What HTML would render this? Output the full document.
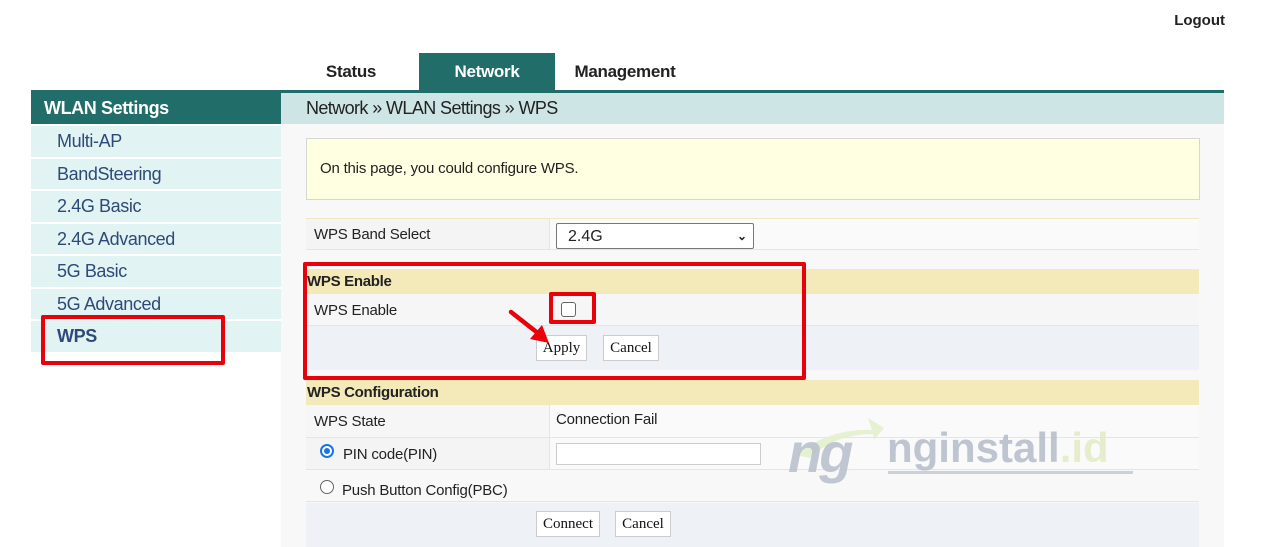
<!DOCTYPE html>
<html><head><meta charset="utf-8"><style>
*{margin:0;padding:0;box-sizing:border-box}
body{width:1263px;height:547px;background:#fff;font-family:"Liberation Sans",sans-serif;position:relative;overflow:hidden;color:#222}
.a{position:absolute}
.tab{position:absolute;top:53px;height:37px;font-size:17px;font-weight:bold;line-height:38px;text-align:center;color:#222;letter-spacing:-0.3px}
.side{position:absolute;left:31px;width:250px;height:30.5px;background:#e2f3f3;color:#2d4a78;font-size:18px;line-height:31px;padding-left:26px;letter-spacing:-0.4px}
.row{position:absolute;left:306px;width:893px;border-top:1px solid #f0e6c0;border-bottom:1px solid #f0e6c0}
.lbl{position:absolute;font-size:15px;color:#222;letter-spacing:-0.2px}
.hdr{position:absolute;left:306px;width:893px;background:#f3e9b9;font-weight:bold;font-size:15px;line-height:25px;padding-left:1px;letter-spacing:-0.3px}
.btn{position:absolute;background:#fff;border:1px solid #ccc;font-family:"Liberation Serif",serif;font-size:15px;text-align:center;color:#111}
.red{position:absolute;border:4px solid #e8000a;border-radius:2px}
</style></head><body>
<div class="a" style="right:38px;top:12px;font-weight:bold;font-size:15px">Logout</div>
<div class="tab" style="left:296px;width:110px">Status</div>
<div class="tab" style="left:419px;width:136px;background:#216d6a;color:#fff">Network</div>
<div class="tab" style="left:555px;width:140px">Management</div>

<div class="a" style="left:31px;top:90px;width:250px;height:34px;background:#216d6a;color:#fff;font-weight:bold;font-size:18px;line-height:36px;padding-left:13px;letter-spacing:-0.4px">WLAN Settings</div>
<div class="a" style="left:281px;top:90px;width:943px;height:3px;background:#216d6a"></div>
<div class="a" style="left:281px;top:93px;width:943px;height:31px;background:#cde5e5;font-size:18px;line-height:31px;padding-left:25px;color:#222;letter-spacing:-0.6px">Network » WLAN Settings » WPS</div>
<div class="a" style="left:281px;top:124px;width:943px;height:423px;background:#f8f8f8"></div>

<div class="side" style="top:126px">Multi-AP</div>
<div class="side" style="top:158.5px">BandSteering</div>
<div class="side" style="top:191px">2.4G Basic</div>
<div class="side" style="top:223.5px">2.4G Advanced</div>
<div class="side" style="top:256px">5G Basic</div>
<div class="side" style="top:288.5px">5G Advanced</div>
<div class="side" style="top:321px;font-weight:bold">WPS</div>

<div class="a" style="left:306px;top:138px;width:894px;height:62px;background:#ffffe2;border:1px solid #d4d8d0;font-size:15px;line-height:60px;padding-left:13px;letter-spacing:-0.2px">On this page, you could configure WPS.</div>

<div class="row" style="top:218px;height:32px;background:#f4f4f4"></div>
<div class="a" style="left:549px;top:219px;width:650px;height:30px;background:#fafafa;border-left:1px solid #f0e6c0"></div>
<div class="lbl" style="left:314px;top:226px">WPS Band Select</div>
<div class="a" style="left:556px;top:223px;width:198px;height:26px;background:#fff;border:1px solid #777;border-radius:2px;font-size:16px;line-height:26px;padding-left:11px">2.4G<span style="position:absolute;right:6px;top:-1px;font-size:12px;font-weight:bold">&#8964;</span></div>

<div class="hdr" style="top:269px">WPS Enable</div>
<div class="row" style="top:294px;height:32px;background:#f6f6f6;border-top:none"></div>
<div class="lbl" style="left:314px;top:302px">WPS Enable</div>
<div class="a" style="left:561px;top:302px;width:15px;height:15px;border:1px solid #666;border-radius:3px;background:#fff"></div>
<div class="a" style="left:306px;top:326px;width:893px;height:44px;background:#eef1f5"></div>
<div class="btn" style="left:536px;top:335px;width:51px;height:26px;line-height:24px">Apply</div>
<div class="btn" style="left:603px;top:335px;width:56px;height:26px;line-height:24px">Cancel</div>

<div class="hdr" style="top:380px">WPS Configuration</div>
<div class="row" style="top:405px;height:33px;background:#f6f6f6;border-top:none"></div>
<div class="a" style="left:549px;top:405px;width:650px;height:32px;background:#fafafa;border-left:1px solid #f0e6c0"></div>
<div class="lbl" style="left:314px;top:413px">WPS State</div>
<div class="lbl" style="left:556px;top:411px">Connection Fail</div>
<div class="row" style="top:437px;height:33px;background:#f4f4f4"></div>
<div class="a" style="left:549px;top:438px;width:650px;height:31px;background:#fafafa;border-left:1px solid #f0e6c0"></div>
<div class="a" style="left:320px;top:444px;width:14px;height:14px;border-radius:50%;border:2px solid #1a73e8;background:#fff"><div style="position:absolute;left:2px;top:2px;width:6px;height:6px;border-radius:50%;background:#1a73e8"></div></div>
<div class="lbl" style="left:343px;top:446px">PIN code(PIN)</div>
<div class="a" style="left:556px;top:443px;width:205px;height:22px;background:#fff;border:1px solid #ccc"></div>
<div class="row" style="top:469px;height:33px;background:#f8f8f8"></div>
<div class="a" style="left:320px;top:480px;width:14px;height:14px;border-radius:50%;border:1px solid #666;background:#fff"></div>
<div class="lbl" style="left:342px;top:482px">Push Button Config(PBC)</div>
<div class="a" style="left:306px;top:503px;width:893px;height:44px;background:#eef1f5"></div>
<div class="btn" style="left:536px;top:511px;width:64px;height:26px;line-height:24px">Connect</div>
<div class="btn" style="left:615px;top:511px;width:56px;height:26px;line-height:24px">Cancel</div>

<!-- watermark -->
<svg class="a" style="left:780px;top:410px" width="370" height="80">
<path d="M15 45 Q50 18 92 20 L88 8 L104 18 L94 30 L93 24 Q55 24 30 48Z" fill="#e2eec9" opacity=".85"/>
<text x="8" y="62" font-family="Liberation Sans" font-weight="bold" font-style="italic" font-size="56" fill="#b7bfcd" opacity=".85" letter-spacing="-3">ng</text>
<text x="107" y="52" font-family="Liberation Sans" font-weight="bold" font-size="42" fill="#b4bcca" opacity=".85">nginstall<tspan fill="#e3ebc6">.id</tspan></text>
<rect x="108" y="61" width="245" height="3" fill="#cad1da"/>
</svg>

<div class="red" style="left:41px;top:315px;width:184px;height:50px"></div>
<div class="red" style="left:303px;top:262px;width:503px;height:118px"></div>
<div class="red" style="left:549px;top:292px;width:47px;height:32px"></div>
<svg class="a" style="left:505px;top:306px" width="50" height="42"><line x1="6" y1="6" x2="34" y2="28" stroke="#e8000a" stroke-width="4.5" stroke-linecap="round"/><path d="M44 37 L25 33 L37 19Z" fill="#e8000a"/></svg>
</body></html>
